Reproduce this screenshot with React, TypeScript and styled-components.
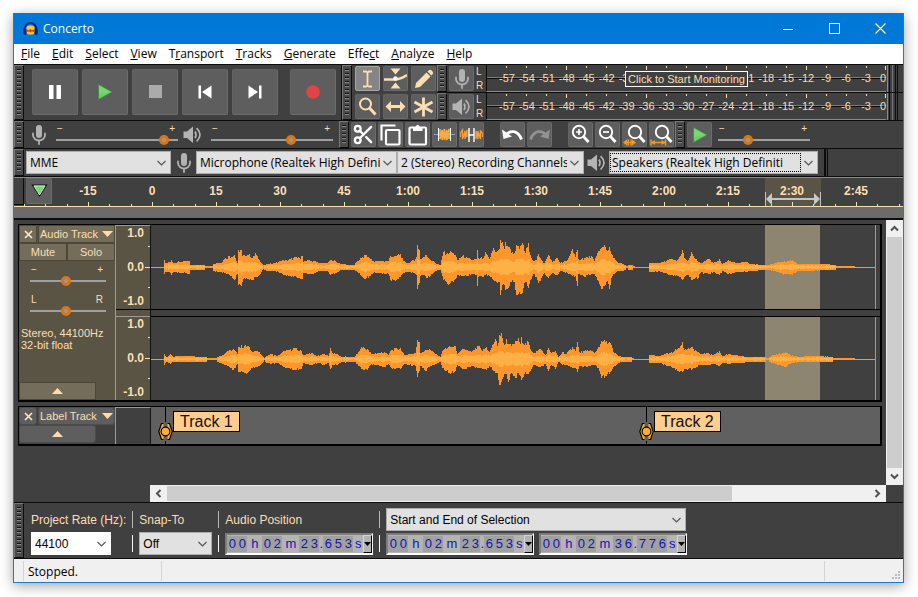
import React from "react";
import styled, { createGlobalStyle, css } from "styled-components";
import { Scissors } from "lucide-react";

const UI = '"Open Sans", "Noto Sans", sans-serif';
const ARIAL = '"Liberation Sans", Arial, sans-serif';
const CREAM = "#fbdfb2";
const DARK = "#404040";
const BUTTON = "#5e5e5e";
const OLIVE = "#595444";
const OLIVE_BUTTON = "#746d5a";
const INK = "#0c0c0c";

const GlobalStyle = createGlobalStyle`
  *, *::before, *::after { box-sizing: border-box; }
  body { margin: 0; background: #fff; overflow: hidden; }
  button, select, input { font: inherit; color: inherit; margin: 0; }
  button { padding: 0; border: 0; background: none; }
  svg { display: block; }
`;

const Desktop = styled.div`
  min-height: 100vh;
  padding: 13px 14px 14px 13px;
  display: flex;
  background: #fff;
`;

const Window = styled.div`
  flex: 1;
  min-width: 0;
  display: flex;
  flex-direction: column;
  border: 1px solid #1a7bc9;
  border-top: 0;
  background: ${DARK};
  box-shadow: 0 3px 12px rgba(0, 0, 0, 0.36);
  font-family: ${ARIAL};
  font-size: 11px;
  color: ${CREAM};
`;

/* Title and menu */

const TitleBar = styled.header`
  display: flex;
  align-items: center;
  height: 31px;
  padding-left: 9px;
  background: #0078d7;
  color: #fff;
  font-family: ${UI};
`;

const Title = styled.h1`
  flex: 1;
  margin: 0 0 0 5px;
  font-size: 12px;
  font-weight: 400;
`;

const CaptionButton = styled.button`
  width: 46px;
  height: 31px;
  display: grid;
  place-items: center;
`;

const MenuBar = styled.nav`
  display: flex;
  align-items: center;
  gap: 12px;
  height: 20px;
  padding: 0 7px;
  background: #fff;
  color: #000;
  font-family: ${UI};
  font-size: 12px;
`;

const MenuItem = styled.button`
  line-height: 18px;
  white-space: nowrap;
`;

/* Toolbars */

const ToolRow = styled.div<{ $h: number }>`
  display: flex;
  flex: none;
  height: ${(p) => p.$h}px;
  border-top: 1px solid ${INK};
`;

const Grip = styled.span`
  flex: none;
  width: 10px;
  border: 1px solid #7a7a7a;
  border-right-color: ${INK};
  border-bottom-color: ${INK};
  background: repeating-linear-gradient(#111 0 1px, #8c8c8c 1px 2px, #4a4a4a 2px 4px) content-box, #4a4a4a;
  padding: 3px 2px;
`;

const Toolbar = styled.div<{ $pad?: string; $line?: boolean; $gap?: number }>`
  display: flex;
  align-items: center;
  flex: 0 1 auto;
  min-width: 0;
  gap: ${(p) => p.$gap ?? 0}px;
  padding: ${(p) => p.$pad ?? "0"};
  border-right: ${(p) => (p.$line ? `1px solid ${INK}` : "0")};
`;

const ToolButton = styled.button<{ $size: number; $pressed?: boolean }>`
  flex: none;
  width: ${(p) => p.$size}px;
  height: ${(p) => p.$size}px;
  display: grid;
  place-items: center;
  border: 1px solid #6c6c6c;
  border-top-color: #636363;
  border-left-color: #636363;
  border-radius: 2px;
  background: ${(p) => (p.$pressed ? "#858585" : BUTTON)};
  ${(p) => p.$pressed && css`border-color: #a5a5a5;`}
`;

const Spacer = styled.span<{ $w: number }>`
  flex: none;
  width: ${(p) => p.$w}px;
`;

const ToolGrid = styled.div`
  display: grid;
  grid-template-columns: repeat(3, 25px);
  gap: 3px;
  padding: 1px 1px 0 3px;
  align-content: start;
`;

const Meters = styled.div`
  flex: 1;
  min-width: 0;
  display: grid;
  grid-template-rows: 27px 28px;
  position: relative;
`;

const MeterRow = styled.div<{ $second?: boolean }>`
  display: flex;
  min-width: 0;
  border-top: ${(p) => (p.$second ? `1px solid ${INK}` : "0")};
`;

const MeterButtonCell = styled.div`
  display: grid;
  place-items: center;
  width: 29px;
  flex: none;
`;

const ChannelNames = styled.div`
  display: flex;
  flex-direction: column;
  justify-content: space-between;
  width: 9px;
  flex: none;
  font-size: 10px;
  line-height: 13px;
  margin-right: 1px;
`;

const MeterScale = styled.div`
  flex: 1;
  min-width: 0;
  display: grid;
  grid-template-columns: repeat(19, 1fr) 10px;
  padding-left: 10px;
  border-left: 1px solid ${INK};
  border-bottom: 1px solid #8a8a8a;
  background: linear-gradient(${DARK} 12px, #7d7d7d 12px 13px, ${INK} 13px 14px, ${DARK} 14px);
`;

const MeterMark = styled.span<{ $major?: boolean; $last?: boolean }>`
  display: flex;
  flex-direction: column;
  align-items: ${(p) => (p.$last ? "flex-end" : "center")};
  font-size: 11px;
  line-height: 12px;
  white-space: nowrap;
  &::before {
    content: "";
    width: 1px;
    height: ${(p) => (p.$major ? 4 : 2)}px;
    margin: 1px 0 ${(p) => (p.$major ? 2 : 4)}px;
    background: ${CREAM};
  }
`;

const MeterEnd = styled.span`
  flex: none;
  width: 6px;
  margin: 0 2px 0 1px;
  border-left: 1px solid #8a8a8a;
  border-right: 1px solid #777;
  background: linear-gradient(90deg, ${DARK} 1px, ${INK} 1px 2px, ${DARK} 2px);
`;

const MeterTail = styled.span`
  flex: none;
  width: 8px;
  border-left: 1px solid ${INK};
  background: linear-gradient(90deg, ${DARK} 1px, ${INK} 1px 2px, ${DARK} 2px);
`;

const Monitoring = styled.span`
  position: absolute;
  top: 6px;
  left: 50px;
  right: 17px;
  display: flex;
  justify-content: center;
  pointer-events: none;
`;

const MonitoringText = styled.span`
  border: 1px solid #fff;
  background: ${DARK};
  padding: 0 2px;
  line-height: 14px;
  font-size: 11px;
  white-space: nowrap;
`;

/* Sliders */

const SliderBox = styled.label<{ $w: number; $h: number }>`
  display: flex;
  flex-direction: column;
  width: ${(p) => p.$w}px;
  height: ${(p) => p.$h}px;
  flex: none;
`;

const SliderEnds = styled.span`
  display: flex;
  justify-content: space-between;
  padding: 0 3px 0 1px;
  font-size: 10px;
  line-height: 13px;
`;

const Range = styled.input`
  appearance: none;
  width: 100%;
  height: 10px;
  background: linear-gradient(transparent 4px, #a0a0a0 4px 6px, transparent 6px);
  &::-webkit-slider-thumb {
    appearance: none;
    width: 10px;
    height: 10px;
    border: 3px solid #d8761c;
    border-radius: 5px;
    background: #a69684;
  }
`;

/* Drop-downs */

const SelectWrap = styled.span<{ $w: number; $white?: boolean; $arial?: boolean }>`
  position: relative;
  display: block;
  flex: 0 1 ${(p) => p.$w}px;
  width: ${(p) => p.$w}px;
  min-width: 0;
  height: 23px;
  color: #000;
  background: ${(p) => (p.$white ? "#fff" : "#e1e1e1")};
  border: 1px solid ${(p) => (p.$white ? "#fff" : "#adadad")};
  font-family: ${(p) => (p.$arial ? ARIAL : UI)};
  font-size: 12px;
`;

const Select = styled.select<{ $focus?: boolean }>`
  appearance: none;
  display: block;
  width: calc(100% - 16px);
  height: 19px;
  margin: 1px 0;
  padding: 0 0 0 3px;
  border: ${(p) => (p.$focus ? "1px dotted #000" : "0")};
  ${(p) => p.$focus && css`padding-left: 1px;`}
  border-radius: 0;
  background: none;
  outline: 0;
  overflow: hidden;
`;

const Chevron = styled.svg`
  position: absolute;
  right: 4px;
  top: 8px;
  pointer-events: none;
`;

function DropDown(p: { label: string; value: string; w: number; white?: boolean; arial?: boolean; focus?: boolean; id?: string }) {
  return (
    <SelectWrap $w={p.w} $white={p.white} $arial={p.arial}>
      <Select id={p.id} aria-label={p.label} $focus={p.focus} defaultValue={p.value}>
        <option>{p.value}</option>
      </Select>
      <Chevron width="9" height="7" viewBox="0 0 9 7">
        <path d="M0.5 1 L4.5 5 L8.5 1" fill="none" stroke="#555" strokeWidth="1.2" />
      </Chevron>
    </SelectWrap>
  );
}

/* Timeline */

const Timeline = styled.div`
  flex: none;
  display: grid;
  grid-template-rows: 29px 1px 11px;
  border-top: 1px solid ${INK};
  border-bottom: 2px solid ${INK};
`;

const TimeRow = styled.div`
  position: relative;
  display: flex;
  overflow: hidden;
  border-top: 1px solid #8c8c8c;
`;

const PinCell = styled.span`
  width: 10px;
  flex: none;
  height: 27px;
  border-right: 1px solid ${INK};
  border-bottom: 1px solid ${INK};
`;

const PinButton = styled(ToolButton)`
  margin: 0 4px 0 2px;
`;

const TimeLabels = styled.div`
  position: relative;
  display: flex;
  flex: 1;
  min-width: 0;
`;

const TimeLabel = styled.span`
  flex: none;
  width: 64px;
  text-align: center;
  font-size: 12px;
  font-weight: 700;
  line-height: 26px;
`;

const TimeTicks = styled.svg`
  position: absolute;
  left: 0;
  bottom: 0;
  width: 100%;
  height: 28px;
  pointer-events: none;
`;

const Baseline = styled.div`
  background: ${CREAM};
`;

const ScrubLane = styled.div`
  background: #6b6b6b;
`;

/* Tracks */

const Workspace = styled.main`
  flex: 1;
  display: grid;
  grid-template-columns: minmax(0, 1fr) 17px;
  grid-template-rows: minmax(0, 1fr) 17px;
`;

const TrackList = styled.div`
  display: flex;
  flex-direction: column;
  gap: 4px;
  padding: 4px;
  min-width: 0;
`;

const Track = styled.section<{ $label?: boolean }>`
  display: flex;
  height: ${(p) => (p.$label ? 40 : 178)}px;
  border: 1px solid #000;
  border-right-width: 2px;
  border-bottom-width: 2px;
  background: ${(p) => (p.$label ? "#606060" : DARK)};
`;

const Panel = styled.div<{ $plain?: boolean }>`
  flex: none;
  width: 96px;
  display: flex;
  flex-direction: column;
  gap: 2px;
  background: ${(p) => (p.$plain ? DARK : OLIVE)};
  padding: 1px;
`;

const PanelRow = styled.div<{ $gap: number }>`
  display: flex;
  gap: ${(p) => p.$gap}px;
`;

const PanelButton = styled.button<{ $plain?: boolean; $w?: number; $title?: boolean }>`
  flex: ${(p) => (p.$w ? `0 0 ${p.$w}px` : "1 1 0")};
  height: 16px;
  display: flex;
  align-items: center;
  justify-content: ${(p) => (p.$title ? "space-between" : "center")};
  padding: 0 1px;
  background: ${(p) => (p.$plain ? BUTTON : OLIVE_BUTTON)};
  box-shadow: 0 0 0 1px ${(p) => (p.$plain ? "#4c4c4c" : "#4b4739")};
  border-radius: ${(p) => (p.$plain ? 2 : 0)}px;
  font-size: 11px;
  white-space: nowrap;
`;

const PanelSliders = styled.div`
  display: flex;
  flex-direction: column;
  gap: 4px;
  padding: 1px 0 0 10px;
`;

const Info = styled.p`
  margin: 6px 0 0 1px;
  line-height: 12px;
  font-size: 11px;
`;

const Push = styled.span`
  flex: 1;
`;

const Scales = styled.div<{ $plain?: boolean }>`
  flex: none;
  width: 36px;
  display: grid;
  grid-template-rows: ${(p) => (p.$plain ? "1fr" : "84px 1fr 84px")};
  border-left: 1px solid #9a9a9a;
  border-right: 1px solid #111;
  background: ${(p) => (p.$plain ? DARK : OLIVE)};
  ${(p) => p.$plain && css`border-top: 1px solid #9a9a9a;`}
`;

const Scale = styled.div`
  display: flex;
  flex-direction: column;
  justify-content: space-between;
  border-top: 1px solid #9a9a9a;
  text-align: right;
  font-size: 12px;
  font-weight: 700;
  line-height: 15px;
  padding-right: 6px;
  background:
    linear-gradient(${CREAM}, ${CREAM}) 100% 20px / 2px 1px no-repeat,
    linear-gradient(${CREAM}, ${CREAM}) 100% 41px / 5px 1px no-repeat,
    linear-gradient(${CREAM}, ${CREAM}) 100% 61px / 2px 1px no-repeat;
`;

const ScaleGap = styled.div`
  border-top: 1px solid #000;
`;

const Channels = styled.div`
  flex: 1;
  min-width: 0;
  display: grid;
  grid-template-rows: 84px 8px 83px;
`;

const Wave = styled.svg`
  width: 100%;
  height: 100%;
  overflow: hidden;
`;

const ChannelGap = styled.div`
  border-top: 1px solid #000;
  border-bottom: 1px solid #000;
`;

const LabelLane = styled.div`
  flex: 1;
  min-width: 0;
  position: relative;
  overflow: hidden;
`;

const LabelMarker = styled.div<{ $x: number }>`
  position: absolute;
  top: 0;
  left: ${(p) => p.$x}px;
  display: flex;
  align-items: flex-start;
`;

const LabelText = styled.span`
  margin-top: 4px;
  padding: 0 6px;
  border: 1px solid #000;
  background: #ffce8e;
  color: #111;
  font-size: 16px;
  line-height: 19px;
  white-space: nowrap;
`;

/* Scrollbars */

const ScrollBar = styled.div<{ $vertical?: boolean }>`
  display: flex;
  flex-direction: ${(p) => (p.$vertical ? "column" : "row")};
  background: #f0f0f0;
  ${(p) => !p.$vertical && css`margin-left: 136px;`}
`;

const ScrollButton = styled.button`
  flex: none;
  width: 17px;
  height: 17px;
  display: grid;
  place-items: center;
`;

const ScrollThumb = styled.span<{ $grow: number; $vertical?: boolean }>`
  flex: ${(p) => p.$grow};
  margin: ${(p) => (p.$vertical ? "0 1px" : "1px 0")};
  background: #cdcdcd;
`;

const ScrollRest = styled.span<{ $grow: number }>`
  flex: ${(p) => p.$grow};
`;

/* Selection toolbar */

const Field = styled.div<{ $first?: boolean }>`
  display: grid;
  grid-template-rows: 23px 23px;
  row-gap: 1px;
  align-items: center;
  align-content: start;
  padding: 5px 6px 0;
  padding-left: ${(p) => (p.$first ? 7 : 6)}px;
`;

const FieldLabel = styled.label`
  font-size: 12px;
  line-height: 22px;
  white-space: nowrap;
`;

const FieldRule = styled.span`
  flex: none;
  width: 1px;
  margin: 8px 0 6px;
  background: linear-gradient(#b4b4b4 17px, transparent 17px 24px, #f4f4f4 24px);
`;

const TimeFields = styled.div`
  display: flex;
  gap: 5px;
`;

const TimeBox = styled.div`
  display: flex;
  align-items: center;
  height: 22px;
  width: 148px;
  border: 2px solid #7c7c7c;
  border-right-color: #fff;
  border-bottom-color: #fff;
  background: #b4b4b4;
  color: #1512b5;
  font-size: 13px;
  line-height: 16px;
`;

const TimeCell = styled.span<{ $w: number; $digit?: boolean }>`
  flex: none;
  width: ${(p) => p.$w}px;
  text-align: center;
  background: ${(p) => (p.$digit ? "#a0a0a0" : "transparent")};
`;

const TimeMenu = styled.button`
  flex: 1;
  height: 18px;
  display: grid;
  place-items: center;
  border: 1px solid #d8d8d8;
  border-right-color: #000;
  border-bottom-color: #000;
`;

/* Status bar */

const StatusBar = styled.footer`
  flex: none;
  display: flex;
  align-items: center;
  height: 24px;
  border-top: 1px solid ${INK};
  background: #f0f0f0;
  color: #000;
  font-family: ${UI};
  font-size: 12px;
`;

const StatusCell = styled.span<{ $w?: number }>`
  flex: ${(p) => (p.$w ? `0 0 ${p.$w}px` : "1 1 0")};
  height: 20px;
  line-height: 22px;
  padding-left: 4px;
  border-right: 1px solid #d4d4d4;
`;

const StatusEnd = styled.span`
  display: flex;
  flex: 0 0 78px;
  align-self: stretch;
`;

const ResizeGrip = styled.svg`
  align-self: flex-end;
  margin: 0 2px 2px auto;
`;

/* Icons */

const Mic = ({ h = 20 }: { h?: number }) => (
  <svg width={(h * 14) / 20} height={h} viewBox="0 0 14 20">
    <rect x="4" y="0" width="6" height="13" rx="3" fill="#b2b2b2" />
    <path d="M1 8.5 V10 A6 5.5 0 0 0 13 10 V8.5 M7 15.5 V19" fill="none" stroke="#b2b2b2" strokeWidth="1.8" strokeLinecap="round" />
  </svg>
);

const Speaker = () => (
  <svg width="19" height="18" viewBox="0 0 19 18">
    <path d="M0.5 5.5 H4 L10 0.5 V17 L4 12 H0.5 Z" fill="#b4b4b4" />
    <path d="M12 5.5 Q14 8.8 12 12 M13.6 2.2 Q20.4 8.8 13.6 15.5" fill="none" stroke="#b4b4b4" strokeWidth="1.7" />
  </svg>
);

const Logo = () => (
  <svg width="15" height="14" viewBox="0 0 15 14">
    <path d="M1.6 9 V7 A5.9 6 0 0 1 13.4 7 V9" fill="none" stroke="#0d1a72" strokeWidth="1.8" />
    <rect x="3.4" y="3.6" width="8.2" height="9" rx="3.4" fill="#ffc91a" />
    <path d="M3.6 8 L5 7.4 L6 8.2 L7.5 7 L9 8.2 L10 7.4 L11.4 8 V9.4 L10 10 L9 9.2 L7.5 10.4 L6 9.2 L5 10 L3.6 9.4 Z" fill="#e8371a" />
    <rect x="0.4" y="6.5" width="3" height="6.5" rx="1.4" fill="#101d86" />
    <rect x="11.6" y="6.5" width="3" height="6.5" rx="1.4" fill="#101d86" />
  </svg>
);

const PlayIcon = ({ size }: { size: number }) => (
  <svg width={size} height={size} viewBox="0 0 16 16">
    <path d="M1.5 0.5 L15 8 L1.5 15.5 Z" fill="#6bd068" stroke="#3f8a3d" strokeWidth="0.8" />
    <path d="M2 1 L14 8 L2 10 Z" fill="#86de80" opacity="0.5" />
  </svg>
);

const Magnifier = ({ sign, range }: { sign?: "+" | "-"; range?: "sel" | "fit" }) => (
  <svg width="23" height="23" viewBox="0 0 23 23">
    <g transform={range ? "translate(2 0)" : undefined}>
      <circle cx="10" cy="9" r="6.2" fill="none" stroke="#fff" strokeWidth="1.9" />
      <path d="M14.5 13.5 L19.5 19" stroke="#fff" strokeWidth="2.8" />
    </g>
    {sign && <path d={sign === "+" ? "M7 9 H13 M10 6 V12" : "M7 9 H13"} stroke="#fff" strokeWidth="1.7" />}
    {range === "sel" && (
      <g fill="#f39a1f">
        <path d="M0 19.5 L4.5 16 V23 Z M13 19.5 L8.5 16 V23 Z" />
        <path d="M4 19.5 H9 M5.5 16.5 V22.5 M8 16.5 V22.5" stroke="#f39a1f" strokeWidth="1.2" />
      </g>
    )}
    {range === "fit" && (
      <g fill="#f39a1f">
        <path d="M1 19.5 L5 17 V22 Z M15.5 19.5 L11.5 17 V22 Z" />
        <path d="M1 16.5 V22.5 M15.5 16.5 V22.5 M1 19.5 H15.5" stroke="#f39a1f" strokeWidth="1.4" />
      </g>
    )}
  </svg>
);

const Undo = ({ color, flip }: { color: string; flip?: boolean }) => (
  <svg width="23" height="17" viewBox="0 0 23 17">
    <g transform={flip ? "translate(23 0) scale(-1 1)" : undefined}>
      <path d="M1 3.5 L2.5 13 L11 10.5 Z" fill={color} />
      <path d="M4.5 9.5 C9 3.5 17 4 20.5 13.5" fill="none" stroke={color} strokeWidth="2.8" />
    </g>
  </svg>
);

const Down = () => (
  <svg width="11" height="6" viewBox="0 0 11 6"><path d="M0 0 H11 L5.5 6 Z" fill="#ffdcae" /></svg>
);

const Up = () => (
  <svg width="11" height="6" viewBox="0 0 11 6"><path d="M0 6 H11 L5.5 0 Z" fill="#ffdcae" /></svg>
);

const Cross = () => (
  <svg width="9" height="9" viewBox="0 0 9 9"><path d="M1 1 L8 8 M8 1 L1 8" stroke="#ffe9c8" strokeWidth="1.6" /></svg>
);

const Arrow = ({ d }: { d: string }) => (
  <svg width="9" height="9" viewBox="0 0 9 9"><path d={d} fill="none" stroke="#505050" strokeWidth="2" /></svg>
);

/* Waveform envelopes: x, peak above the axis, peak below the axis */

type Point = [number, number, number?];

const LEFT: Point[] = [
  [13, 7, 6], [14, 4], [19, 5], [20, 7, 7], [22, 4], [26, 5], [34, 6, 5], [38, 6], [39, 2.4, 2], [53, 2], [54, 1], [61, 1], [62, 3], [66, 4],
  [70, 4], [73, 8, 5], [78, 11, 7], [82, 11, 11], [83, 12, 12], [86, 4, 6], [87, 17, 17], [90, 17, 18], [91, 11, 14], [93, 12, 10], [98, 13, 12],
  [101, 9, 12], [104, 14, 9], [107, 8], [110, 4, 4], [112, 2, 1], [114, 2], [116, 3], [124, 4, 3], [131, 7, 6], [137, 7, 8], [145, 10, 9],
  [148, 9, 10], [151, 11, 11], [152, 5, 5], [156, 7, 6], [162, 6], [168, 4, 3], [176, 4, 3], [179, 7, 7], [184, 6, 5], [190, 3, 2],
  [203, 2, 2], [206, 6, 4], [210, 9, 8], [214, 12, 11], [219, 8, 8], [222, 6, 5], [237, 6, 6], [239, 11, 12], [244, 11, 13], [249, 13, 9],
  [252, 6, 5], [257, 4, 4], [264, 8, 6], [265, 10, 7], [266, 22, 21], [268, 17, 15], [269, 8, 8], [272, 10, 7], [275, 12, 10], [278, 8, 9],
  [282, 6, 5], [286, 3, 2], [289, 2, 2], [292, 15, 12], [296, 14, 16], [299, 16, 15], [304, 12, 11], [306, 7, 7], [311, 11, 8], [316, 9, 8],
  [320, 7, 6], [325, 8, 7], [326, 17, 18], [327, 9, 9], [332, 9, 9], [334, 15, 7], [338, 8, 8], [342, 19, 12], [345, 15, 14], [348, 18, 14],
  [349, 27, 27], [351, 25, 17], [353, 18, 17], [354, 25, 22], [358, 20, 18], [361, 15, 12], [363, 14, 14], [365, 22, 27], [368, 18, 24],
  [371, 24, 25], [374, 14, 14], [377, 24, 20], [379, 12, 12], [382, 6, 6], [385, 7, 9], [387, 13, 15], [391, 6, 8], [393, 4, 5], [396, 10, 9],
  [397, 12, 10], [401, 5, 5], [406, 9, 7], [409, 4, 3], [416, 7, 5], [421, 18, 8], [424, 10, 8], [426, 17, 18], [427, 8, 6], [434, 9, 9],
  [440, 11, 6], [443, 6, 6], [446, 14, 12], [450, 19, 21], [453, 22, 18], [456, 16, 13], [458, 20, 21], [460, 13, 10], [464, 7, 5],
  [467, 4, 3], [472, 3, 3], [475, 1], [479, 2], [483, 1], [488, 0.6], [497, 0.6], [498, 4, 4], [509, 4, 4], [516, 7, 6], [519, 8, 7], [526, 7, 8],
  [528, 10, 9], [531, 17, 12], [533, 9, 9], [537, 7, 7], [540, 15, 12], [542, 11, 11], [546, 6, 11], [549, 4, 5], [558, 8, 6], [562, 4, 4],
  [568, 8, 7], [571, 3, 3], [577, 7, 6], [586, 4, 4], [596, 5, 4], [598, 3, 3], [614, 2, 2], [624, 4, 3], [631, 5, 6], [641, 7, 7],
  [646, 3, 3], [659, 3, 3], [672, 3, 2], [684, 2, 2], [685, 1, 1], [703, 1], [704, 0.6], [724, 0.6],
];

const RIGHT: Point[] = [
  [13, 5, 5], [15, 2], [19, 5, 4], [22, 2], [26, 3, 2], [42, 3, 2], [44, 2], [55, 2], [56, 1], [65, 1], [67, 2], [71, 4], [76, 8, 6], [82, 10, 10],
  [86, 5, 4], [87, 12, 12], [93, 13, 13], [97, 13, 12], [100, 8, 8], [106, 8, 7], [111, 3, 3], [113, 1], [115, 3], [119, 5, 4], [126, 3, 3],
  [133, 8, 7], [137, 9, 8], [143, 11, 10], [150, 8, 9], [152, 4, 3], [160, 6, 5], [166, 3, 3], [173, 5, 5], [177, 3, 3], [179, 11, 9],
  [181, 6, 5], [186, 5, 5], [191, 1.5], [194, 2.5], [202, 1.5], [206, 5, 4], [210, 12, 9], [216, 10, 10], [220, 5, 4], [233, 7, 7], [237, 4, 4],
  [240, 9, 8], [249, 11, 9], [253, 4, 4], [264, 6, 6], [266, 19, 17], [268, 17, 11], [269, 6, 6], [274, 9, 11], [278, 10, 7], [285, 5, 4],
  [289, 2, 2], [291, 8, 8], [294, 11, 11], [299, 12, 14], [304, 13, 11], [306, 5, 5], [312, 10, 9], [320, 7, 6], [327, 13, 8], [331, 8, 9],
  [335, 12, 10], [338, 7, 6], [344, 20, 13], [346, 13, 13], [348, 24, 25], [350, 26, 22], [353, 14, 14], [355, 20, 14], [357, 15, 22],
  [360, 13, 13], [365, 18, 18], [367, 21, 13], [369, 15, 16], [370, 22, 20], [373, 14, 14], [377, 17, 14], [379, 10, 11], [382, 6, 5],
  [389, 10, 7], [394, 4, 4], [397, 11, 11], [400, 6, 5], [404, 8, 9], [407, 2, 2], [411, 7, 5], [415, 5, 5], [421, 12, 8], [424, 8, 8],
  [426, 17, 12], [428, 7, 6], [435, 8, 7], [439, 9, 6], [443, 6, 5], [447, 12, 8], [450, 18, 18], [455, 18, 16], [459, 16, 12], [462, 7, 7],
  [467, 3, 3], [474, 1.5], [479, 2], [482, 1], [488, 0.6], [497, 0.6], [498, 4, 3], [509, 3, 3], [515, 6, 6], [519, 6, 6], [526, 10, 11],
  [531, 17, 12], [533, 9, 9], [540, 12, 10], [544, 9, 8], [549, 5, 5], [557, 6, 5], [562, 4, 4], [568, 8, 6], [571, 3, 3], [577, 5, 4],
  [589, 3, 3], [598, 2, 2], [612, 2, 2], [617, 1], [620, 3, 3], [627, 5, 5], [634, 7, 7], [639, 4, 4], [647, 2, 2], [656, 3, 2],
  [671, 3, 2], [681, 2, 2], [682, 1], [703, 1], [704, 0.6], [724, 0.6],
];

function noise(n: number) {
  const s = Math.sin(n * 12.9898) * 43758.5453;
  return s - Math.floor(s);
}

function envelope(points: Point[], seed: number) {
  const outer: string[] = ["M0 42h13v1h-13z"];
  const inner: string[] = [];
  for (let i = 0; i < points.length - 1; i++) {
    const [x0, u0, d0 = u0] = points[i];
    const [x1, u1, d1 = u1] = points[i + 1];
    for (let x = x0; x < x1; x++) {
      const t = (x - x0) / (x1 - x0);
      let up = u0 + (u1 - u0) * t;
      let down = d0 + (d1 - d0) * t;
      if (x !== x0 && up > 2.5) {
        up *= 0.84 + noise(x + seed) * 0.26;
        down *= 0.84 + noise(x * 3 + seed) * 0.26;
      }
      if (up < 1) {
        outer.push(`M${x} 42h1v1h-1z`);
        continue;
      }
      const top = Math.round(up);
      const bottom = Math.round(down);
      outer.push(`M${x} ${42 - top}h1v${top + bottom + (top > 1 ? 1 : 0)}h-1z`);
      const mean = (up + down) / 2;
      if (mean > 1.6) {
        const core = Math.max(1, Math.round(Math.min(mean * 0.36 + noise(x * 7), 8)));
        inner.push(`M${x} ${42 - core}h1v${core * 2}h-1z`);
      }
    }
  }
  return { outer: outer.join(""), inner: inner.join("") };
}

const WAVES = [envelope(LEFT, 3), envelope(RIGHT, 11)];

function Channel({ index }: { index: number }) {
  return (
    <Wave role="img" aria-label={index ? "Right channel" : "Left channel"} shapeRendering="crispEdges">
      <rect x="614" y="0" width="55" height="84" fill="#8d8570" />
      <path d={WAVES[index].outer} fill="#ff962c" />
      <path d={WAVES[index].inner} fill="#ffb145" />
      <rect x="724" y="0" width="1" height="84" fill="#9a9a9a" />
    </Wave>
  );
}

const METER_MARKS = Array.from({ length: 20 }, (_, i) => i * 3 - 57);
const TIMES = ["-15", "0", "15", "30", "45", "1:00", "1:15", "1:30", "1:45", "2:00", "2:15", "2:30", "2:45"];
const MINOR_TICKS = Array.from({ length: 42 }, (_, i) => Math.round(10 + (i * 64) / 3));

function Slider(p: { label: string; w: number; value: number; ends?: [string, string]; h?: number }) {
  const [a, b] = p.ends ?? ["−", "+"];
  return (
    <SliderBox $w={p.w} $h={p.h ?? 25}>
      <SliderEnds><span>{a}</span><span>{b}</span></SliderEnds>
      <Range type="range" aria-label={p.label} min={0} max={100} defaultValue={p.value} />
    </SliderBox>
  );
}

/* `hidden` is the range of marks whose numbers make room for the prompt. */
function Meter(p: { label: string; second?: boolean; hidden?: [number, number]; children: React.ReactNode }) {
  const isHidden = (m: number) => p.hidden !== undefined && m >= p.hidden[0] && m <= p.hidden[1];
  return (
    <MeterRow $second={p.second}>
      <Grip />
      <MeterButtonCell>
        <ToolButton $size={25} aria-label={p.label}>{p.children}</ToolButton>
      </MeterButtonCell>
      <ChannelNames><span>L</span><span>R</span></ChannelNames>
      <MeterScale>
        {METER_MARKS.map((m) => (
          <MeterMark key={m} $major={m % 12 === 0} $last={m === 0}>{isHidden(m) ? null : m}</MeterMark>
        ))}
      </MeterScale>
      <MeterEnd />
      <MeterTail />
    </MeterRow>
  );
}

function TimeControl({ label, value }: { label: string; value: string }) {
  const widths: Record<string, number> = { h: 15, m: 17, ".": 4, s: 10 };
  return (
    <TimeBox role="group" aria-label={label}>
      {value.split("").map((c, i) => (
        <TimeCell key={i} $w={widths[c] ?? 10} $digit={!(c in widths)}>{c}</TimeCell>
      ))}
      <TimeMenu aria-label={`${label} format`}>
        <svg width="7" height="4" viewBox="0 0 7 4"><path d="M0 0 H7 L3.5 4 Z" fill="#000" /></svg>
      </TimeMenu>
    </TimeBox>
  );
}

function Label({ x, text }: { x: number; text: string }) {
  return (
    <LabelMarker $x={x}>
      <svg width="15" height="37" viewBox="0 0 15 37">
        <path d="M7.5 0 V15 M7.5 34 V37" stroke="#000" />
        <path d="M5.5 16.5 H3.5 L0.8 24.5 L3.5 32.5 H5.5 M9.5 16.5 H11.5 L14.2 24.5 L11.5 32.5 H9.5" fill="#ffab3c" stroke="#000" strokeWidth="1.2" />
        <circle cx="7.5" cy="24.5" r="4.4" fill="#ffab3c" stroke="#000" strokeWidth="1.2" />
      </svg>
      <LabelText>{text}</LabelText>
    </LabelMarker>
  );
}

/* Each menu name, split round its access key */
const MENUS: [string, string, string][] = [
  ["", "F", "ile"], ["", "E", "dit"], ["", "S", "elect"], ["", "V", "iew"], ["T", "r", "ansport"], ["", "T", "racks"],
  ["", "G", "enerate"], ["Effe", "c", "t"], ["", "A", "nalyze"], ["", "H", "elp"],
];

export default function App() {
  return (
    <Desktop>
      <GlobalStyle />
      <Window>
        <TitleBar>
          <Logo />
          <Title>Concerto</Title>
          <CaptionButton aria-label="Minimize">
            <svg width="10" height="10"><path d="M0 5.5 H10" stroke="#fff" /></svg>
          </CaptionButton>
          <CaptionButton aria-label="Maximize">
            <svg width="11" height="11"><rect x="0.5" y="0.5" width="10" height="10" fill="none" stroke="#fff" /></svg>
          </CaptionButton>
          <CaptionButton aria-label="Close">
            <svg width="11" height="11"><path d="M0.5 0.5 L10.5 10.5 M10.5 0.5 L0.5 10.5" stroke="#fff" strokeWidth="1.1" /></svg>
          </CaptionButton>
        </TitleBar>

        <MenuBar>
          {MENUS.map(([a, b, c]) => (
            <MenuItem key={a + b + c}>{a}<u>{b}</u>{c}</MenuItem>
          ))}
        </MenuBar>

        <ToolRow $h={56}>
          <Grip />
          <Toolbar $pad="0 5px 2px 8px" $gap={4} $line>
            <ToolButton $size={46} aria-label="Pause">
              <svg width="14" height="14"><path d="M1 0 H5.5 V14 H1 Z M8.5 0 H13 V14 H8.5 Z" fill="#fff" /></svg>
            </ToolButton>
            <ToolButton $size={46} aria-label="Play"><PlayIcon size={16} /></ToolButton>
            <ToolButton $size={46} aria-label="Stop">
              <svg width="13" height="13"><rect width="13" height="13" fill="#ababab" /></svg>
            </ToolButton>
            <ToolButton $size={46} aria-label="Skip to start">
              <svg width="14" height="14"><path d="M0.5 0.5 H3 V13.5 H0.5 Z M13.5 0.5 V13.5 L4 7 Z" fill="#fff" /></svg>
            </ToolButton>
            <ToolButton $size={46} aria-label="Skip to end">
              <svg width="14" height="14"><path d="M13.5 0.5 H11 V13.5 H13.5 Z M0.5 0.5 V13.5 L10 7 Z" fill="#fff" /></svg>
            </ToolButton>
            <Spacer $w={4} />
            <ToolButton $size={46} aria-label="Record">
              <svg width="14" height="14"><circle cx="7" cy="7" r="6.8" fill="#e04444" /></svg>
            </ToolButton>
          </Toolbar>
          <Grip />
          <ToolGrid>
            <ToolButton $size={25} $pressed aria-label="Selection tool">
              <svg width="11" height="18"><path d="M1 1.5 H4 L5.5 2.5 L7 1.5 H10 M5.5 2 V16 M1 16.5 H4 L5.5 15.5 L7 16.5 H10" fill="none" stroke={CREAM} strokeWidth="1.8" /></svg>
            </ToolButton>
            <ToolButton $size={25} aria-label="Envelope tool">
              <svg width="23" height="21" viewBox="1 0 23 21">
                <path d="M7.5 0.5 H17.5 L12.5 6.5 Z M7.5 20.5 H17.5 L12.5 14.5 Z" fill={CREAM} />
                <path d="M0 11.5 H10 Q16 12 24 7" fill="none" stroke={CREAM} strokeWidth="2.4" />
                <circle cx="12.5" cy="10.5" r="2.2" fill="#fff" />
              </svg>
            </ToolButton>
            <ToolButton $size={25} aria-label="Draw tool">
              <svg width="20" height="20"><path d="M1 19 L2 14 L12.5 3.5 L16.5 7.5 L6 18 Z M13.5 2.5 L15.2 1 Q16.5 0.4 17.7 1.6 L18.7 2.8 Q19.6 4 18.8 5 L17.4 6.5 Z" fill={CREAM} /></svg>
            </ToolButton>
            <ToolButton $size={25} aria-label="Zoom tool">
              <svg width="20" height="20"><circle cx="7.5" cy="7" r="5.5" fill="none" stroke={CREAM} strokeWidth="2" /><path d="M11.5 11 L17.5 17.5" stroke={CREAM} strokeWidth="3" /></svg>
            </ToolButton>
            <ToolButton $size={25} aria-label="Time shift tool">
              <svg width="21" height="13"><path d="M0.5 6.5 L6 1 V5 H15 V1 L20.5 6.5 L15 12 V8 H6 V12 Z" fill={CREAM} /></svg>
            </ToolButton>
            <ToolButton $size={25} aria-label="Multi-tool">
              <svg width="21" height="20"><path d="M10.5 0.5 V19.5 M1.5 5 L19.5 15 M19.5 5 L1.5 15" stroke={CREAM} strokeWidth="2.8" /></svg>
            </ToolButton>
          </ToolGrid>
          <Meters>
            <Meter label="Record meter" hidden={[-36, -24]}><Mic /></Meter>
            <Meter label="Playback meter" second><Speaker /></Meter>
            <Monitoring><MonitoringText>Click to Start Monitoring</MonitoringText></Monitoring>
          </Meters>
        </ToolRow>

        <ToolRow $h={28}>
          <Grip />
          <Toolbar $pad="0 6px 0 8px">
            <Mic h={20} />
            <Spacer $w={10} />
            <Slider label="Recording volume" w={122} value={92} />
            <Spacer $w={5} />
            <Speaker />
            <Spacer $w={9} />
            <Slider label="Playback volume" w={122} value={67} />
          </Toolbar>
          <Grip />
          <Toolbar $pad="0 1px 0 2px" $gap={2}>
            <ToolButton $size={25} aria-label="Cut"><Scissors size={23} color="#fff" strokeWidth={2.4} /></ToolButton>
            <ToolButton $size={25} aria-label="Copy">
              <svg width="21" height="22" fill="none" stroke="#fff" strokeWidth="2.2"><path d="M1.5 16.5 V1.5 H15.5" /><rect x="6" y="6" width="13.5" height="14.5" rx="1" /></svg>
            </ToolButton>
            <ToolButton $size={25} aria-label="Paste">
              <svg width="20" height="22"><rect x="1.5" y="3.5" width="16.5" height="17" rx="1" fill="none" stroke="#fff" strokeWidth="2.2" /><path d="M5 7 V3 H7.5 Q9.75 -1.5 12 3 H14.5 V7 Z" fill="#fff" /></svg>
            </ToolButton>
            <ToolButton $size={25} aria-label="Trim audio">
              <svg width="21" height="15" fill="none"><path d="M0 7.5 H21" stroke="#86a6dc" /><path d="M4.5 1 V14 M16.5 1 V14" stroke="#fff" /><path d="M6 2 V12 L8.2 3 V13 L10.5 2 V13 L12.8 3 V13 L15 2 V12" stroke="#f7ab45" strokeWidth="1.6" /></svg>
            </ToolButton>
            <ToolButton $size={25} aria-label="Silence audio">
              <svg width="23" height="16" fill="none"><path d="M0.5 10 V6 L2.5 3 V12 L5 4 V12 L7 3 V10 M16 12 V4 L18 12 V4 L20.5 12 V4 L22.5 6 V10" stroke="#f3a03a" strokeWidth="1.3" /><path d="M9 1 V15 M14 1 V15 M9 8 H14" stroke="#fff" strokeWidth="1.4" /></svg>
            </ToolButton>
            <Spacer $w={12} />
            <ToolButton $size={25} aria-label="Undo"><Undo color="#fff" /></ToolButton>
            <ToolButton $size={25} aria-label="Redo"><Undo color="#929292" flip /></ToolButton>
            <Spacer $w={12} />
            <ToolButton $size={25} aria-label="Zoom in"><Magnifier sign="+" /></ToolButton>
            <ToolButton $size={25} aria-label="Zoom out"><Magnifier sign="-" /></ToolButton>
            <ToolButton $size={25} aria-label="Fit selection"><Magnifier range="sel" /></ToolButton>
            <ToolButton $size={25} aria-label="Fit project"><Magnifier range="fit" /></ToolButton>
          </Toolbar>
          <Grip />
          <Toolbar $pad="0 2px" $gap={6}>
            <ToolButton $size={25} aria-label="Play at speed"><PlayIcon size={16} /></ToolButton>
            <Slider label="Playback speed" w={92} value={30} />
          </Toolbar>
        </ToolRow>

        <ToolRow $h={28}>
          <Grip />
          <Toolbar $pad="0 6px 0 2px" $line>
            <DropDown label="Audio host" value="MME" w={145} />
            <Spacer $w={6} />
            <Mic h={20} />
            <Spacer $w={5} />
            <DropDown label="Recording device" value="Microphone (Realtek High Defini" w={201} />
            <DropDown label="Recording channels" value="2 (Stereo) Recording Channels" w={187} />
            <Spacer $w={3} />
            <Speaker />
            <Spacer $w={3} />
            <DropDown label="Playback device" value="Speakers (Realtek High Definiti" w={209} focus />
          </Toolbar>
          <MeterTail />
        </ToolRow>

        <Timeline>
          <TimeRow>
            <TimeTicks shapeRendering="crispEdges">
              <rect x="751" y="0" width="56" height="28" fill={OLIVE} />
              {MINOR_TICKS.map((x) => (
                <rect key={x} x={x} y="26" width="1" height="2" fill={CREAM} />
              ))}
              {TIMES.map((t, i) => (
                <rect key={t} x={74 + i * 64} y="24" width="1" height="4" fill={CREAM} />
              ))}
              <g fill="#c4c4c4">
                <rect x="751" y="14" width="1" height="14" />
                <rect x="806" y="14" width="1" height="14" />
                <rect x="757" y="20" width="43" height="2" />
              </g>
              <path d="M752 21 L758 15 V27 Z M806 21 L800 15 V27 Z" fill="#c9c9c9" shapeRendering="auto" />
            </TimeTicks>
            <PinCell />
            <PinButton $size={26} aria-label="Pin play head">
              <svg width="17" height="14"><path d="M1.5 1 H15.5 L8.5 12 Z" fill="#76d777" stroke="#111" strokeWidth="1.2" /><path d="M3 2 H14 L8.5 11 Z" fill="none" stroke="#e4f7e0" strokeWidth="0.8" /></svg>
            </PinButton>
            <TimeLabels>
              {TIMES.map((t) => <TimeLabel key={t}>{t}</TimeLabel>)}
            </TimeLabels>
          </TimeRow>
          <Baseline />
          <ScrubLane />
        </Timeline>

        <Workspace>
          <TrackList>
            <Track>
              <Panel>
                <PanelRow $gap={3}>
                  <PanelButton $w={16} aria-label="Close track"><Cross /></PanelButton>
                  <PanelButton $title>Audio Track<Down /></PanelButton>
                </PanelRow>
                <PanelRow $gap={2}>
                  <PanelButton>Mute</PanelButton>
                  <PanelButton>Solo</PanelButton>
                </PanelRow>
                <PanelSliders>
                  <Slider label="Gain" w={76} value={47} h={26} />
                  <Slider label="Pan" w={76} value={47} ends={["L", "R"]} h={26} />
                </PanelSliders>
                <Info>Stereo, 44100Hz<br />32-bit float</Info>
                <Push />
                <PanelRow $gap={0}>
                  <PanelButton $w={75} aria-label="Collapse track"><Up /></PanelButton>
                </PanelRow>
              </Panel>
              <Scales>
                <Scale><span>1.0</span><span>0.0</span><span>-1.0</span></Scale>
                <ScaleGap />
                <Scale><span>1.0</span><span>0.0</span><span>-1.0</span></Scale>
              </Scales>
              <Channels>
                <Channel index={0} />
                <ChannelGap />
                <Channel index={1} />
              </Channels>
            </Track>

            <Track $label>
              <Panel $plain>
                <PanelRow $gap={3}>
                  <PanelButton $plain $w={16} aria-label="Close track"><Cross /></PanelButton>
                  <PanelButton $plain $title>Label Track<Down /></PanelButton>
                </PanelRow>
                <PanelRow $gap={0}>
                  <PanelButton $plain $w={75} aria-label="Collapse track"><Up /></PanelButton>
                </PanelRow>
              </Panel>
              <Scales $plain />
              <LabelLane>
                <Label x={7} text="Track 1" />
                <Label x={488} text="Track 2" />
              </LabelLane>
            </Track>
          </TrackList>

          <ScrollBar $vertical>
            <ScrollButton aria-label="Scroll up"><Arrow d="M1 6.5 L4.5 3 L8 6.5" /></ScrollButton>
            <ScrollThumb $vertical $grow={1} />
            <ScrollButton aria-label="Scroll down"><Arrow d="M1 2.5 L4.5 6 L8 2.5" /></ScrollButton>
          </ScrollBar>
          <ScrollBar>
            <ScrollButton aria-label="Scroll left"><Arrow d="M6.5 1 L3 4.5 L6.5 8" /></ScrollButton>
            <ScrollThumb $grow={565} />
            <ScrollRest $grow={137} />
            <ScrollButton aria-label="Scroll right"><Arrow d="M2.5 1 L6 4.5 L2.5 8" /></ScrollButton>
          </ScrollBar>
        </Workspace>

        <ToolRow $h={56}>
          <Grip />
          <Field $first>
            <FieldLabel htmlFor="rate">Project Rate (Hz):</FieldLabel>
            <DropDown id="rate" label="Project Rate (Hz)" value="44100" w={80} white arial />
          </Field>
          <FieldRule />
          <Field>
            <FieldLabel htmlFor="snap">Snap-To</FieldLabel>
            <DropDown id="snap" label="Snap-To" value="Off" w={73} arial />
          </Field>
          <FieldRule />
          <Field>
            <FieldLabel as="span">Audio Position</FieldLabel>
            <TimeControl label="Audio Position" value="00h02m23.653s" />
          </Field>
          <FieldRule />
          <Field>
            <DropDown label="Selection display" value="Start and End of Selection" w={300} arial />
            <TimeFields>
              <TimeControl label="Selection start" value="00h02m23.653s" />
              <TimeControl label="Selection end" value="00h02m36.776s" />
            </TimeFields>
          </Field>
        </ToolRow>

        <StatusBar>
          <StatusCell $w={10} />
          <StatusCell $w={138}>Stopped.</StatusCell>
          <StatusCell />
          <StatusEnd>
            <ResizeGrip width="9" height="9">
              <path d="M6 0h2v2h-2z M3 3h2v2h-2z M6 3h2v2h-2z M0 6h2v2h-2z M3 6h2v2h-2z M6 6h2v2h-2z" fill="#bcbcbc" />
            </ResizeGrip>
          </StatusEnd>
        </StatusBar>
      </Window>
    </Desktop>
  );
}
